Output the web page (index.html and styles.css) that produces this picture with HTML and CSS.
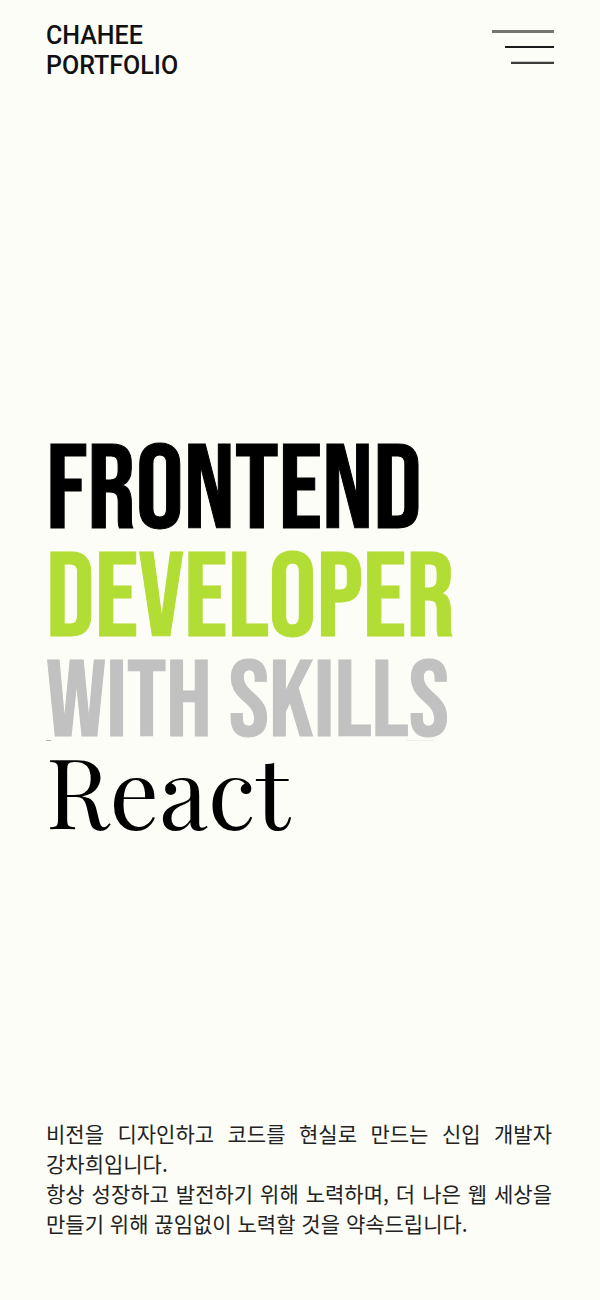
FILE: index.html
```html
<!DOCTYPE html>
<html lang="ko">
<head>
<meta charset="utf-8">
<meta name="viewport" content="width=device-width, initial-scale=1">
<title>CHAHEE PORTFOLIO</title>
<link rel="stylesheet" href="styles.css">
</head>
<body>
<div class="page">
  <header class="header">
    <a class="logo" href="#">CHAHEE<br>PORTFOLIO</a>
    <button class="menu" type="button" aria-label="메뉴">
      <svg class="menu-icon" viewBox="0 0 62 34" aria-hidden="true">
        <path d="M0 1.5H62" stroke="#747571" stroke-width="3"/>
        <path d="M13 17H62" stroke="#1c1c1c" stroke-width="2"/>
        <path d="M19 31.5H62" stroke="#c9cac5" stroke-width="1"/>
        <path d="M19 33H62" stroke="#3c3c3b" stroke-width="2"/>
      </svg>
    </button>
  </header>
  <main class="main">
    <h1 class="title">
      <span class="line">FRONTEND</span>
      <span class="line line-green">DEVELOPER</span>
      <span class="line line-gray">WITH SKILLS</span>
      <span class="skill">React</span>
    </h1>
  </main>
  <footer class="intro">
    <p>비전을 디자인하고 코드를 현실로 만드는 신입 개발자 강차희입니다.</p>
    <p>항상 성장하고 발전하기 위해 노력하며, 더 나은 웹 세상을 만들기 위해 끊임없이 노력할 것을 약속드립니다.</p>
  </footer>
</div>
</body>
</html>
```
FILE: styles.css
```css
* { box-sizing: border-box; }
body { margin: 0; background: #fcfdf7; color: #000; }
.page {
  min-height: 100vh;
  padding: 21px 46px 62px;
  display: flex;
  flex-direction: column;
}
.header {
  display: flex;
  justify-content: space-between;
  align-items: flex-start;
}
.logo {
  font: 500 25px/30px Roboto, "Liberation Sans", sans-serif;
  color: #111;
  text-decoration: none;
}
.menu {
  margin: 9px 0 0;
  padding: 0;
  border: 0;
  background: none;
  cursor: pointer;
}
.menu-icon { display: block; width: 62px; height: 34px; }
.main {
  flex: 1;
  display: flex;
  flex-direction: column;
  justify-content: center;
  padding-top: 64px;
}
.title {
  margin: 0;
  font: 400 120px/108px "Bebas Neue", "Liberation Sans Narrow", sans-serif;
}
.line { display: block; white-space: nowrap; -webkit-text-stroke: 1px currentColor; }
.line-green { color: #b2dd34; }
.line-gray {
  color: #c1c1c1;
  font-size: 108px;
  line-height: 100px;
  background:
    linear-gradient(#b5b5b1, #b5b5b1) 0 86px / 5px 1px no-repeat,
    linear-gradient(#efefea, #efefea) 360px 86px / 28px 1px no-repeat;
}
.skill {
  display: block;
  font: 400 98px/72px "Playfair Display", "Liberation Serif", serif;
}
.intro {
  padding-right: 2px;
  font: 400 21px/30px "Noto Sans CJK KR", sans-serif;
  color: #222;
  text-align: justify;
  word-break: keep-all;
}
.intro p { margin: 0; }
```
